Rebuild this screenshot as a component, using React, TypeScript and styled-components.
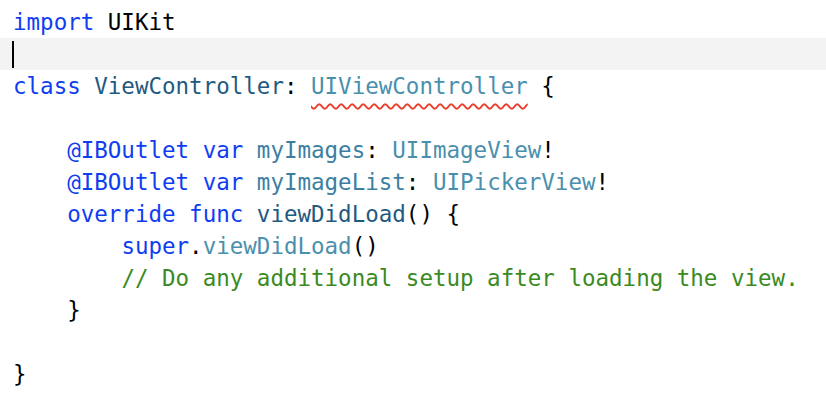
import React from 'react'
import styled, { createGlobalStyle } from 'styled-components'

const GlobalStyle = createGlobalStyle`
    html, body {
        margin: 0;
        padding: 0;
        background: #ffffff;
    }
`

type Kind = 'plain' | 'keyword' | 'decl' | 'type' | 'ident' | 'comment'

const colors: Record<Kind, string> = {
    plain: '#000000',
    keyword: '#0f3df0',
    decl: '#1f5a80',
    type: '#4a90ad',
    ident: '#3c7fa3',
    comment: '#3a8a23',
}

const Editor = styled.div`
    width: 826px;
    height: 402px;
    padding-top: 6px;
    box-sizing: border-box;
    background: #ffffff;
    font-family: "DejaVu Sans Mono", "Liberation Mono", monospace;
    font-size: 22.5px;
    overflow: hidden;
`

const Line = styled.div<{ $current?: boolean }>`
    height: 32px;
    line-height: 32px;
    padding-left: 13px;
    white-space: pre;
    background: ${({ $current }) => ($current ? '#f3f3f3' : 'transparent')};
    display: flex;
    align-items: center;
`

const Token = styled.span<{ $kind: Kind; $error?: boolean }>`
    color: ${({ $kind }) => colors[$kind]};
    ${({ $error }) =>
        $error &&
        `
        text-decoration: underline wavy #e8402a;
        text-decoration-thickness: 1.6px;
        text-underline-offset: 9px;
    `}
`

const Caret = styled.span`
    display: inline-block;
    width: 2px;
    height: 27px;
    margin-left: -1px;
    background: #000000;
`

type Tok = [Kind, string, boolean?]

const code: Tok[][] = [
    [['keyword', 'import'], ['plain', ' UIKit']],
    [],
    [['keyword', 'class'], ['plain', ' '], ['decl', 'ViewController'], ['plain', ': '], ['type', 'UIViewController', true], ['plain', ' {']],
    [],
    [['plain', '    '], ['keyword', '@IBOutlet'], ['plain', ' '], ['keyword', 'var'], ['plain', ' '], ['ident', 'myImages'], ['plain', ': '], ['type', 'UIImageView'], ['plain', '!']],
    [['plain', '    '], ['keyword', '@IBOutlet'], ['plain', ' '], ['keyword', 'var'], ['plain', ' '], ['ident', 'myImageList'], ['plain', ': '], ['type', 'UIPickerView'], ['plain', '!']],
    [['plain', '    '], ['keyword', 'override'], ['plain', ' '], ['keyword', 'func'], ['plain', ' '], ['decl', 'viewDidLoad'], ['plain', '() {']],
    [['plain', '        '], ['keyword', 'super'], ['plain', '.'], ['type', 'viewDidLoad'], ['plain', '()']],
    [['plain', '        '], ['comment', '// Do any additional setup after loading the view.']],
    [['plain', '    }']],
    [],
    [['plain', '}']],
]

const App: React.FunctionComponent = () => {
    return (
        <>
            <GlobalStyle />
            <Editor>
                {code.map((line, i) => (
                    <Line key={i} $current={i === 1}>
                        {i === 1 && <Caret />}
                        {line.map(([kind, text, error], j) => (
                            <Token key={j} $kind={kind} $error={error}>
                                {text}
                            </Token>
                        ))}
                    </Line>
                ))}
            </Editor>
        </>
    )
}

export default App
